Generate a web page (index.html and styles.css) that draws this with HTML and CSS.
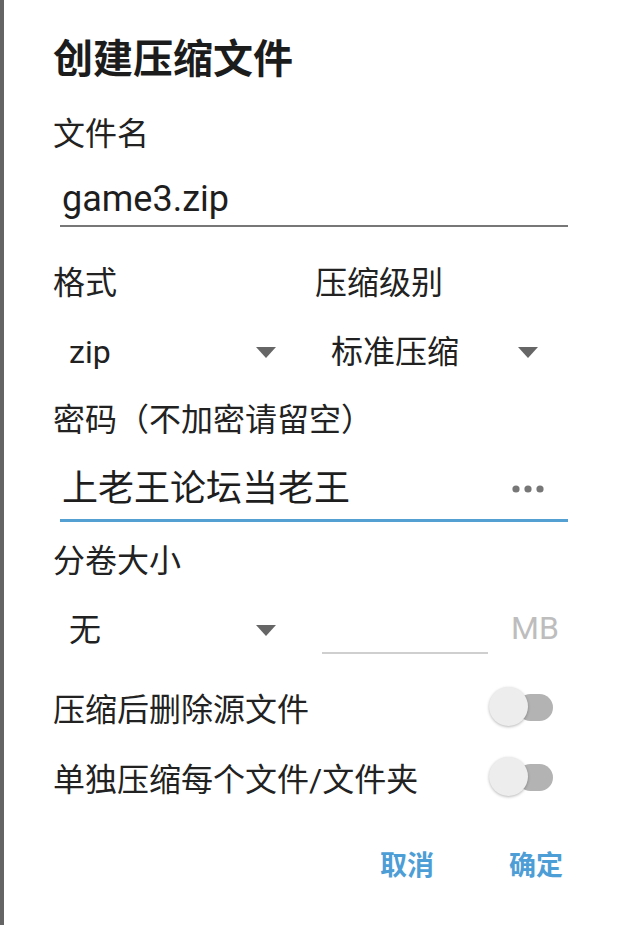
FILE: index.html
```html
<!DOCTYPE html>
<html lang="zh-CN">
<head>
<meta charset="utf-8">
<title>创建压缩文件</title>
<link rel="stylesheet" href="styles.css">
</head>
<body>
<div class="page">
  <div class="dialog">
    <h1 class="title">创建压缩文件</h1>

    <div class="label label-name">文件名</div>
    <div class="field field-name"><span class="field-text">game3.zip</span></div>

    <div class="grid2 row-labels">
      <div class="label">格式</div>
      <div class="label">压缩级别</div>
    </div>
    <div class="grid2 row-selects">
      <div class="select"><span>zip</span><svg class="tri" width="20" height="11" viewBox="0 0 20 11"><polygon points="0,0 20,0 10,11" fill="#666"/></svg></div>
      <div class="select"><span>标准压缩</span><svg class="tri" width="20" height="11" viewBox="0 0 20 11"><polygon points="0,0 20,0 10,11" fill="#666"/></svg></div>
    </div>

    <div class="label label-pass">密码（不加密请留空）</div>
    <div class="field field-pass"><span class="field-text">上老王论坛当老王</span><svg class="dots" width="32" height="8" viewBox="0 0 32 8"><circle cx="4" cy="4" r="3.6" fill="#777"/><circle cx="16" cy="4" r="3.6" fill="#777"/><circle cx="28" cy="4" r="3.6" fill="#777"/></svg></div>

    <div class="label label-split">分卷大小</div>
    <div class="grid2 row-split">
      <div class="select"><span>无</span><svg class="tri" width="20" height="11" viewBox="0 0 20 11"><polygon points="0,0 20,0 10,11" fill="#666"/></svg></div>
      <div class="split-size">
        <div class="field field-size"></div>
        <span class="unit">MB</span>
      </div>
    </div>

    <div class="switch-row switch-row-1">
      <span>压缩后删除源文件</span>
      <div class="switch"><div class="track"></div><div class="thumb"></div></div>
    </div>
    <div class="switch-row switch-row-2">
      <span>单独压缩每个文件/文件夹</span>
      <div class="switch"><div class="track"></div><div class="thumb"></div></div>
    </div>

    <div class="actions">
      <button class="btn">取消</button>
      <button class="btn">确定</button>
    </div>
  </div>
</div>
</body>
</html>
```
FILE: styles.css
```css
* { box-sizing: border-box; }
html, body { margin: 0; padding: 0; background: #fff; }
body {
  font-family: Roboto, "Noto Sans CJK SC", sans-serif;
  color: #212121;
}
.page {
  width: 617px;
  height: 925px;
  border-left: 4px solid #646464;
  background: #fff;
  overflow: hidden;
}
.dialog {
  display: flex;
  flex-direction: column;
  padding: 40px 49px 0 49px;
}
.title {
  margin: 0;
  font-size: 40px;
  line-height: 40px;
  font-weight: 700;
  color: #1c1c1c;
}
.label {
  font-size: 32px;
  line-height: 40px;
  color: #222;
}
.label-name { margin-top: 34px; }
.field {
  display: flex;
  align-items: center;
  margin-left: 7px;
}
.field-name {
  margin-top: 14px;
  height: 59px;
  padding-top: 6px;
  border-bottom: 2px solid #777;
}
.field-text {
  font-size: 36px;
  line-height: 51px;
  padding-left: 2px;
  color: #1e1e1e;
}
.grid2 {
  display: grid;
  grid-template-columns: 1fr 1fr;
  column-gap: 9px;
}
.row-labels { margin-top: 36px; }
.row-selects { margin-top: 29px; height: 40px; }
.select {
  display: flex;
  align-items: center;
  justify-content: space-between;
  padding: 0 30px 0 16px;
  font-size: 32px;
  line-height: 40px;
  color: #212121;
}
.tri { display: block; }
.label-pass {
  margin-top: 28px;
  text-spacing-trim: space-all;
}
.field-pass {
  margin-top: 14px;
  height: 68px;
  padding: 5px 24px 0 0;
  border-bottom: 3px solid #55a0d3;
  justify-content: space-between;
}
.field-pass .field-text { line-height: 60px; }
.dots { display: block; }
.label-split { margin-top: 19px; }
.row-split { margin-top: 25px; height: 48px; }
.row-split .select { height: 48px; }
.split-size {
  display: flex;
  align-items: center;
}
.field-size {
  width: 166px;
  height: 48px;
  border-bottom: 2px solid #cfcfcf;
}
.unit {
  margin-left: 23px;
  font-size: 32px;
  line-height: 40px;
  color: #bdbdbd;
  margin-bottom: 4px;
}
.switch-row {
  display: flex;
  align-items: center;
  justify-content: space-between;
  height: 40px;
  font-size: 32px;
  color: #222;
  padding-right: 14px;
}
.switch-row-1 { margin-top: 33px; }
.switch-row-2 { margin-top: 30px; }
.switch {
  position: relative;
  width: 66px;
  height: 40px;
}
.track {
  position: absolute;
  left: 29px;
  top: 7px;
  width: 36px;
  height: 27px;
  border-radius: 14px;
  background: #b3b3b3;
}
.thumb {
  position: absolute;
  left: 1px;
  top: 0;
  width: 39px;
  height: 39px;
  border-radius: 50%;
  background: #ededed;
  box-shadow: 0 1px 3px rgba(0,0,0,0.28);
}
.actions {
  display: flex;
  justify-content: flex-end;
  gap: 75px;
  margin-top: 49px;
  height: 40px;
  padding-right: 5px;
}
.btn {
  border: 0;
  background: none;
  padding: 0;
  font-family: Roboto, "Noto Sans CJK SC", sans-serif;
  font-size: 27px;
  line-height: 40px;
  font-weight: 700;
  color: #4d9ed6;
}
```
